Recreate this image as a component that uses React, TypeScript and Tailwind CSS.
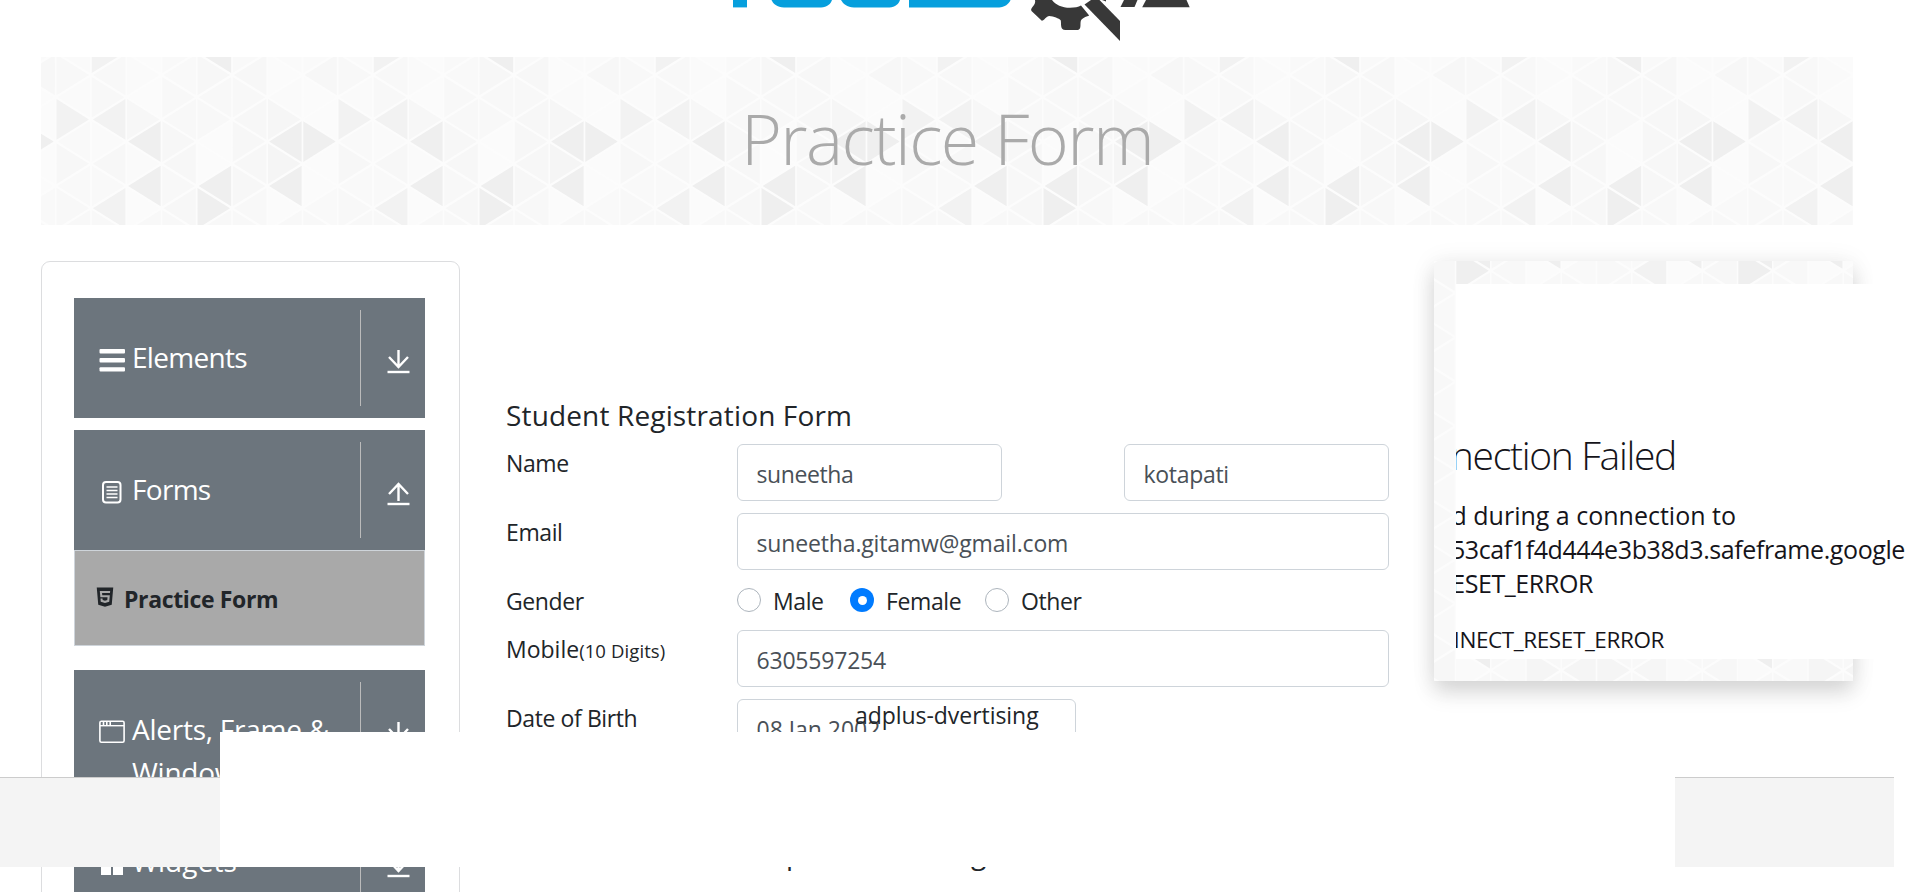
import type { ReactNode } from "react";
import { IoLogoHtml5 } from "react-icons/io5";

const STEP = 35.25;
const HALF = 22.2;

// Shades of the triangle mosaic, keyed by "column:row" of the repeating tile.
const SHADES: Record<string, string> = {
  "0:-1": "#fafafa", "0:0": "#f8f8f8", "0:1": "#fafafa", "0:2": "#f2f2f2", "0:3": "#f9f9f9", "0:4": "#f7f7f7", "0:5": "#f9f9f9", "0:6": "#f8f8f8",
  "1:-1": "#f2f2f2", "1:0": "#f8f8f8", "1:1": "#f8f8f8", "1:2": "#f2f2f2", "1:3": "#fafafa", "1:4": "#f7f7f7", "1:5": "#f9f9f9", "1:6": "#f2f2f2",
  "2:-1": "#fbfbfb", "2:0": "#fafafa", "2:1": "#fbfbfb", "2:2": "#f7f7f7", "2:3": "#efefef", "2:4": "#fafafa", "2:5": "#efefef", "2:6": "#fbfbfb",
  "3:-1": "#f9f9f9", "3:0": "#f9f9f9", "3:1": "#f8f8f8", "3:2": "#f8f8f8", "3:3": "#f7f7f7", "3:4": "#f7f7f7", "3:5": "#f8f8f8", "3:6": "#f7f7f7",
  "4:-1": "#efefef", "4:0": "#f7f7f7", "4:1": "#f8f8f8", "4:2": "#f8f8f8", "4:3": "#fbfbfb", "4:4": "#fbfbfb", "4:5": "#efefef", "4:6": "#efefef",
  "5:-1": "#f9f9f9", "5:0": "#f7f7f7", "5:1": "#f8f8f8", "5:2": "#f7f7f7", "5:3": "#f7f7f7", "5:4": "#f7f7f7", "5:5": "#f7f7f7", "5:6": "#f8f8f8",
  "6:-1": "#fafafa", "6:0": "#fbfbfb", "6:1": "#fafafa", "6:2": "#f6f6f6", "6:3": "#efefef", "6:4": "#f5f5f5", "6:5": "#efefef", "6:6": "#fbfbfb",
  "7:-1": "#fafafa", "7:0": "#f7f7f7", "7:1": "#fbfbfb", "7:2": "#fbfbfb", "7:3": "#efefef", "7:4": "#fbfbfb", "7:5": "#fbfbfb", "7:6": "#f9f9f9",
  "4:23": "#efefef", "6:24": "#f5f5f5", "7:24": "#f5f5f5", "0:24": "#f5f5f5", "1:24": "#f6f6f6", "2:24": "#fafafa", "3:24": "#f7f7f7", "4:24": "#fafafa", "5:24": "#f9f9f9",
};

function Mosaic({ width, height, x0, y0, firstRow, rows }: { width: number; height: number; x0: number; y0: number; firstRow: number; rows: number }) {
  const shapes: ReactNode[] = [];
  const columns = Math.ceil(width / STEP) + 6;
  for (let i = -5; i < columns; i++) {
    const col = ((i % 8) + 8) % 8;
    const left = x0 + i * STEP;
    if (left > width || left + STEP < 0) continue;
    for (let r = firstRow; r < firstRow + rows; r++) {
      const y = y0 + (r - firstRow - 1) * HALF;
      const pointsLeft = (col + r + 100) % 2 === 1;
      const a = pointsLeft ? left + 2 : left + STEP - 2;
      const b = pointsLeft ? left + STEP - 0.8 : left + 0.8;
      shapes.push(
        <polygon key={`${i}:${r}`} points={`${a},${y} ${b},${y - HALF + 1.9} ${b},${y + HALF - 1.9}`} fill={SHADES[`${col}:${r}`] ?? (r % 2 ? "#f8f8f8" : "#f9f9f9")} />,
      );
    }
  }
  return (
    <svg className="absolute inset-0" width={width} height={height} viewBox={`0 0 ${width} ${height}`}>
      <rect width={width} height={height} fill="#fcfcfc" />
      {shapes}
    </svg>
  );
}

function Logo() {
  return (
    <svg width="520" height="57" viewBox="0 0 520 57">
      <g fill="#069fdd">
        <path d="M33 0h14v7.4H33z" />
        <path d="M71.500 0H132c-1 3.500-5 7.400-11 7.400H84c-7 0-11-3.900-12.500-7.400z" />
        <path d="M141 0h59c-1 3.500-5 7.400-10.500 7.400H154c-7 0-11-3.900-13-7.400z" />
        <path d="M209 0h101.500c-1.500 4-6 7.400-11.500 7.400h-90z" />
      </g>
      <g fill="#383838">
        <path d="M335 0h17c3.500 4.800 10 7.800 18 7.800 4.500 0 8.500-1 11-2.300l8.200 10c-5 2-8.200 3-8.600 6.500-.4 3 .8 7.900-3.200 7.900h-12c-5.500 0-4-6-4.600-9.500-2-2-7-4-11.500-4.300-3 0-5 4.700-7.500 4.700L331.500 11c-2-3 5-6 3.500-11z" />
        <path d="M391 0h8.500L420 21v20l-35.500-36.500z" />
        <path d="M402 0h4v1.500z" />
        <path d="M424 0h13.500l-3 7H420.500z" />
        <path d="M446 0h40.500l3.200 7.200h-47.500z" />
      </g>
    </svg>
  );
}

function BarsIcon() {
  return (
    <svg width="26" height="24" viewBox="0 0 26 24" fill="#fff">
      <rect x="0.500" y="1" width="25.500" height="4.400" rx="1" />
      <rect x="0.500" y="10" width="25.500" height="4.400" rx="1" />
      <rect x="0.500" y="19.200" width="25.500" height="4.400" rx="1" />
    </svg>
  );
}

function DocumentIcon() {
  return (
    <svg width="26" height="24" viewBox="0 0 26 24" fill="none" stroke="#fff">
      <rect x="4" y="2" width="17.500" height="20.500" rx="3" strokeWidth="2" />
      <path d="M7.500 7h11M7.500 10.500h11M7.500 14h11M7.500 17.500h11" strokeWidth="1.300" />
    </svg>
  );
}

function WindowIcon() {
  return (
    <svg width="26" height="24" viewBox="0 0 26 24" fill="none" stroke="#fff">
      <rect x="0.900" y="1.300" width="24.200" height="21" rx="1.500" strokeWidth="1.600" />
      <path d="M1 5.700h24" strokeWidth="1.400" />
      <path d="M4.500 1.500v3.500M7.800 1.500v3.500M11.200 1.500v3.500" strokeWidth="1.600" />
    </svg>
  );
}

function WidgetsIcon() {
  return (
    <svg width="26" height="24" viewBox="0 0 26 24" fill="#fff">
      <rect x="2" y="1" width="10" height="9" />
      <rect x="14" y="1" width="10" height="9" />
      <rect x="2" y="12" width="10" height="11" />
      <rect x="14" y="12" width="10" height="11" />
    </svg>
  );
}

function Arrow({ up = false }: { up?: boolean }) {
  return (
    <svg width="23" height="25" viewBox="0 0 23 25" fill="none" stroke="#fff" strokeWidth="2.400">
      <path d={up ? "M11.500 19V2M2 12l9.500-10L21 12" : "M11.500 0v17M2 7l9.500 10L21 7"} />
      <path d="M0.500 22h22" strokeWidth="2.400" />
    </svg>
  );
}

function MenuGroup({ icon, label, up = false }: { icon: ReactNode; label: ReactNode; up?: boolean }) {
  return (
    <div className="flex h-[120px] w-[351px] bg-[#6c757d] text-white">
      <div className="flex w-[286px] items-start pl-[25px] pt-[38px]">
        <span className="mr-[7px] mt-[12px] w-[26px] shrink-0">{icon}</span>
        <span className="whitespace-nowrap text-[28px] leading-[43px] tracking-[-0.7px]">{label}</span>
      </div>
      <div className="my-[12px] w-px bg-[#bbb]" />
      <div className="flex flex-1 items-start justify-center pl-[10px] pt-[52px]">
        <Arrow up={up} />
      </div>
    </div>
  );
}

function Row({ label, children }: { label: ReactNode; children: ReactNode }) {
  return (
    <div className="mb-[12px] flex">
      <div className="w-[231px] shrink-0 whitespace-nowrap leading-[38px]">{label}</div>
      {children}
    </div>
  );
}

function Field({ value, className }: { value: string; className: string }) {
  return (
    <div className={`h-[57px] rounded-[6px] border border-[#ced4da] bg-white pl-[18.5px] pt-[2px] leading-[55px] text-[#495057] ${className}`}>{value}</div>
  );
}

function Radio({ label, checked = false, className }: { label: string; checked?: boolean; className: string }) {
  return (
    <div className={`flex items-center ${className}`}>
      {checked ? (
        <span className="flex size-[24px] items-center justify-center rounded-full bg-[#007bff]">
          <span className="size-[9px] rounded-full bg-white" />
        </span>
      ) : (
        <span className="size-[24px] rounded-full border border-[#adb5bd] bg-white" />
      )}
      <span className="ml-[12px] pt-[2px] leading-[34px]">{label}</span>
    </div>
  );
}

export default function App() {
  return (
    <div className="relative h-[892px] w-[1920px] overflow-hidden bg-white font-['Open_Sans','Noto_Sans',sans-serif] text-[23px] tracking-[-0.4px] text-[#212529]">
      <header className="flex h-[57px] pl-[700px]">
        <Logo />
      </header>

      <div className="relative ml-[41px] h-[168px] w-[1812px] overflow-hidden">
        <Mosaic width={1812} height={168} x0={14.7} y0={18} firstRow={-1} rows={9} />
        <h1 className="relative pl-[700px] text-[70px] font-light leading-[162px] tracking-[-1.600px] text-[#aaa]">Practice Form</h1>
      </div>

      <div className="ml-[41px] mt-[36px] flex">
        <aside className="h-[700px] w-[419px] rounded-t-[9px] border border-[#dcdddf] pl-[32px] pt-[36px]">
          <MenuGroup icon={<BarsIcon />} label="Elements" />
          <div className="h-[12px]" />
          <MenuGroup icon={<DocumentIcon />} label="Forms" up />
          <div className="flex h-[96px] w-[351px] items-center border border-[#ced4da] bg-[#a9a9a9] pl-[19px] font-bold">
            <IoLogoHtml5 className="mb-[2px] size-[22px]" />
            <span className="ml-[8px] pt-[3px] tracking-[-0.35px]">Practice Form</span>
          </div>
          <div className="h-[24px]" />
          <MenuGroup icon={<WindowIcon />} label={<span className="tracking-[-0.25px]">Alerts, Frame &amp;<br />Windows</span>} />
          <div className="h-[12px]" />
          <MenuGroup icon={<WidgetsIcon />} label={<span className="tracking-[0.1px]">Widgets</span>} />
        </aside>

        <main className="ml-[46px] w-[883px] pt-[134px]">
          <h2 className="mb-[10px] pt-px text-[28px] leading-[38px] tracking-[0.15px]">Student Registration Form</h2>
          <Row label="Name">
            <Field value="suneetha" className="w-[265px]" />
            <Field value="kotapati" className="ml-[122px] w-[265px] tracking-[-0.3px]" />
          </Row>
          <Row label="Email">
            <Field value="suneetha.gitamw@gmail.com" className="w-[652px] tracking-[-0.15px]" />
          </Row>
          <div className="-mb-[2px]">
            <Row label="Gender">
              <div className="flex h-[36px]">
                <Radio label="Male" className="w-[113px]" />
                <Radio label="Female" checked className="w-[135px]" />
                <Radio label="Other" className="w-[120px]" />
              </div>
            </Row>
          </div>
          <Row label={<><span className="tracking-[0px]">Mobile</span><span className="text-[18.500px] tracking-[0.1px]">(10 Digits)</span></>}>
            <Field value="6305597254" className="w-[652px] tracking-[-0.2px]" />
          </Row>
          <Row label="Date of Birth">
            <Field value="08 Jan 2002" className="w-[339px] tracking-[0px]" />
          </Row>
        </main>

        <section className="relative ml-[45px] h-[420px] w-[419px] shadow-[0_12px_20px_rgba(0,0,0,0.13),0_2px_24px_rgba(0,0,0,0.08)]">
          <Mosaic width={419} height={420} x0={-119.500} y0={9.700} firstRow={5} rows={21} />
          <div className="relative ml-[22px] h-[398px] w-[464px] pt-[23px]">
            <div className="h-[375px] overflow-hidden bg-white text-[#15141a]">
              <div className="mt-[146px] flex w-[220px] justify-end whitespace-nowrap text-[39px] font-light leading-[50px] tracking-[-1.300px]">Secure Connection Failed</div>
              <div className="mt-[18px] flex w-[280px] justify-end whitespace-nowrap text-[25px] leading-[34px] tracking-[0px]">An error occurred during a connection to</div>
              <div className="flex w-[449px] justify-end whitespace-nowrap text-[25px] leading-[34px]">53caf1f4d444e3b38d3.safeframe.google</div>
              <div className="flex w-[137px] justify-end whitespace-nowrap text-[25px] leading-[34px]">PR_CONNECT_RESET_ERROR</div>
              <div className="mt-[23px] flex w-[208px] justify-end whitespace-nowrap text-[22.500px] leading-[34px]">Error code: PR_CONNECT_RESET_ERROR</div>
            </div>
          </div>
        </section>
      </div>

      <div className="absolute left-[855px] top-[697px] leading-[36px] tracking-[-0.05px]">adplus-dvertising</div>
      <div className="absolute left-[752px] top-[835px] text-[28px] leading-[36px] tracking-[0.600px]">adplus-dvertising</div>
      <div className="absolute left-0 top-[777px] h-[90px] w-[1894px] border-t border-[#ccc] bg-[#f4f4f4]" />
      <div className="absolute left-[220px] top-[732px] h-[135px] w-[1455px] bg-white" />
    </div>
  );
}
